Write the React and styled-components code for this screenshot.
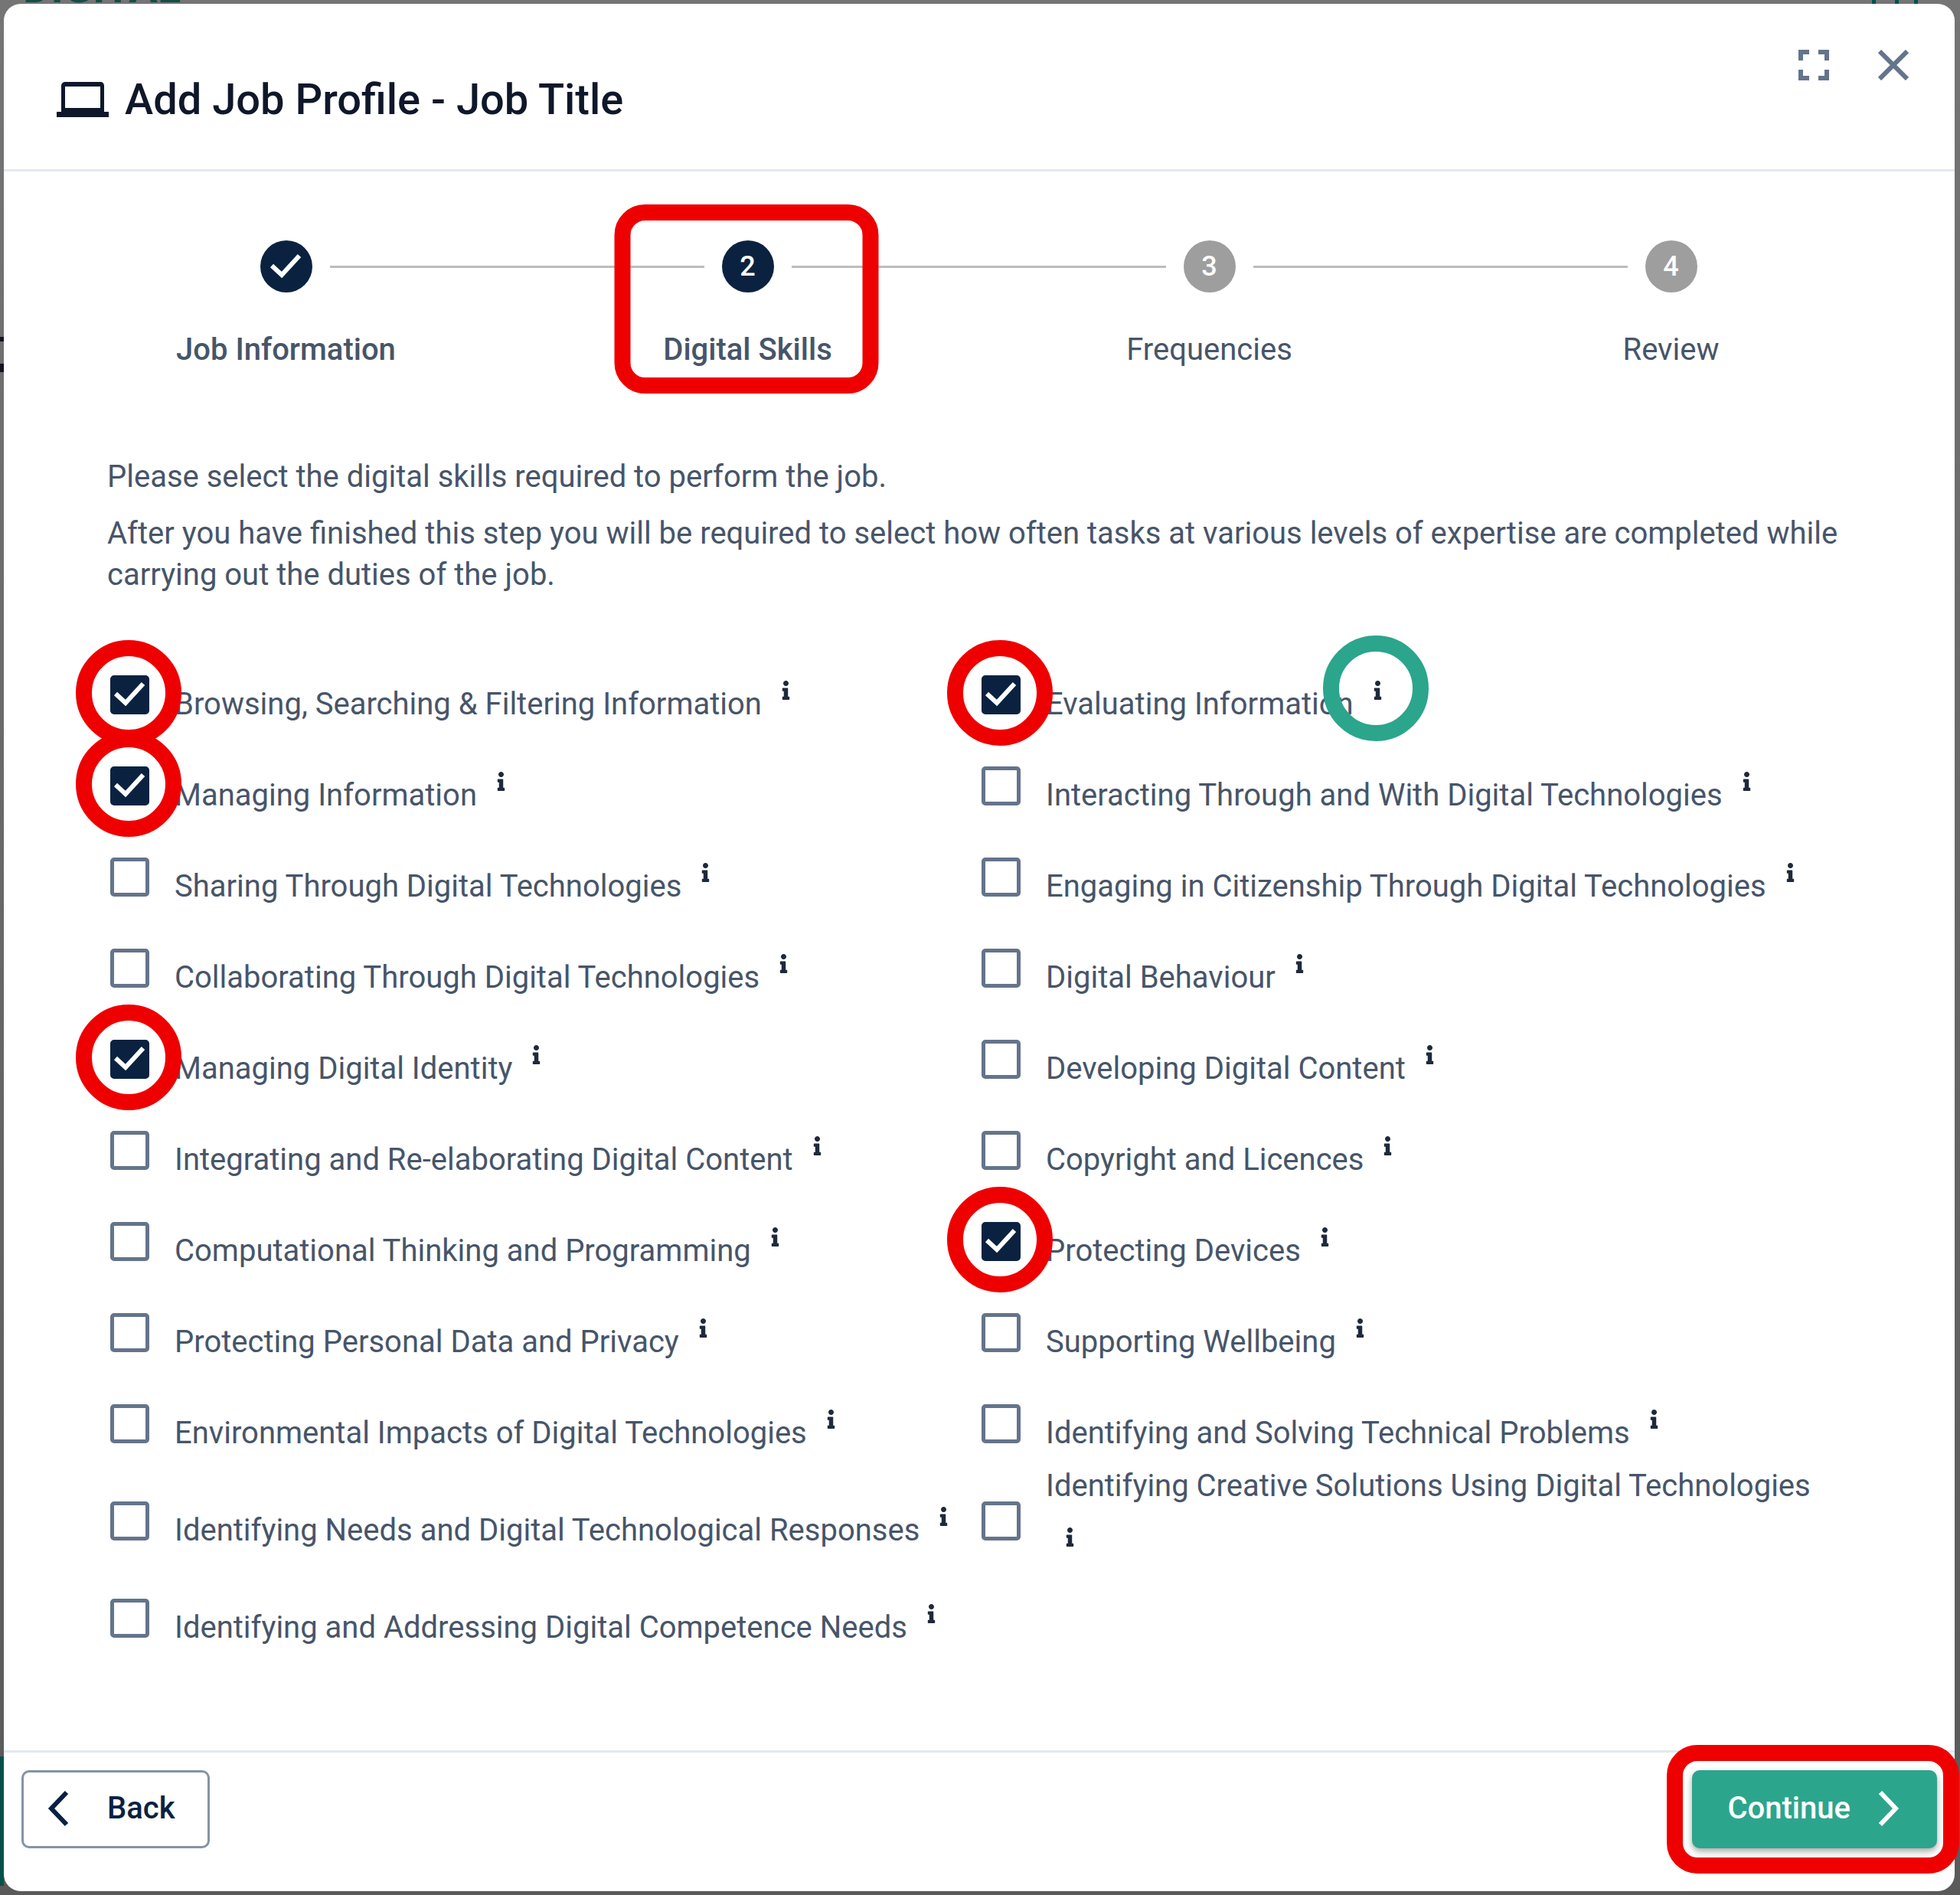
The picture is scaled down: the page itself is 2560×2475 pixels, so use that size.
import React, { useState } from 'react';
import styled, { createGlobalStyle, css } from 'styled-components';
import { FaInfo } from 'react-icons/fa';

const GlobalStyle = createGlobalStyle`
  * {
    box-sizing: border-box;
  }
  body {
    margin: 0;
    font-family: Roboto, 'Liberation Sans', sans-serif;
    font-size: 40px;
    line-height: 54px;
    color: #475569;
  }
`;

const Backdrop = styled.div`
  position: relative;
  overflow: hidden;
  min-height: 100vh;
  padding: 5px 7px 5px 5px;
  background:
    linear-gradient(#00524b, #00524b) 0 2294px / 5px 169px no-repeat,
    linear-gradient(#10141f, #10141f) 0 440px / 5px 6px no-repeat,
    linear-gradient(#10141f, #10141f) 0 475px / 5px 11px no-repeat,
    linear-gradient(#00524b, #00524b) right 110px top 0 / 5px 5px no-repeat,
    linear-gradient(#00524b, #00524b) right 80px top 0 / 5px 5px no-repeat,
    linear-gradient(#00524b, #00524b) right 55px top 0 / 5px 5px no-repeat,
    linear-gradient(#757575, #646464 60%, #5a5a5a);
`;
const Brand = styled.div`
  position: absolute;
  top: -43px;
  left: 30px;
  font-size: 56px;
  font-weight: 700;
  color: #124f45;
`;
const Dialog = styled.main`
  position: relative;
  border-radius: 22px;
  background: #fff;
`;

const Header = styled.header`
  display: flex;
  align-items: flex-start;
  justify-content: space-between;
  height: 219px;
  padding: 50px 50px 0 69px;
  border-bottom: 3px solid #e2e8f0;
`;
const Title = styled.h1`
  display: flex;
  align-items: center;
  gap: 21px;
  margin: 40px 0 0;
  font-size: 56px;
  font-weight: 500;
  line-height: 70px;
  color: #0f172a;
`;
const HeaderActions = styled.div`
  display: flex;
  gap: 44px;
`;
const IconButton = styled.button`
  display: flex;
  padding: 10px;
  border: 0;
  background: none;
  color: #64748b;
  cursor: pointer;
`;

const Steps = styled.ol`
  display: flex;
  margin: 0;
  padding: 90px 69px 0 67px;
  list-style: none;
`;
const Step = styled.li`
  position: relative;
  flex: 1;
  display: flex;
  flex-direction: column;
  align-items: center;
  gap: 48px;
`;
const StepTrack = styled.div`
  display: flex;
  align-items: center;
  gap: 23px;
  width: 100%;
`;
const StepLine = styled.span`
  flex: 1;
  height: 3px;
  background: ${({ $hidden }) => ($hidden ? 'transparent' : '#bdbdbd')};
`;
const StepCircle = styled.span`
  display: flex;
  align-items: center;
  justify-content: center;
  width: 68px;
  height: 68px;
  border-radius: 50%;
  background: ${({ $reached }) => ($reached ? '#0a2240' : '#9e9e9e')};
  color: #fff;
  font-size: 36px;
  font-weight: 500;
`;
const StepLabel = styled.span`
  font-weight: ${({ $reached }) => ($reached ? 500 : 400)};
`;

const Body = styled.form`
  padding: 112px 137px 113px 135px;
`;
const Intro = styled.p`
  margin: 0 0 20px;
`;
const SkillGrid = styled.div`
  display: grid;
  grid-template-columns: 1fr 1fr;
  padding-top: 50px;
`;
const Skill = styled.div`
  display: flex;
  align-items: center;
  min-height: 119px;
  padding-left: 4px;
`;
const CheckWrap = styled.span`
  position: relative;
  flex: none;
  display: flex;
  width: 51px;
  height: 51px;
  margin-right: 33px;
`;
const CheckInput = styled.input`
  appearance: none;
  width: 51px;
  height: 51px;
  margin: 0;
  border: 5px solid #64748b;
  border-radius: 5px;
  cursor: pointer;

  &:checked {
    border-color: #0a2240;
    background: #0a2240;
  }
`;
const CheckMark = styled.svg`
  position: absolute;
  inset: 0;
  pointer-events: none;
`;
const SkillText = styled.div`
  margin: -5px 0;
`;
const InfoButton = styled.button`
  display: inline-flex;
  padding: 27px 26px 39px;
  border: 0;
  background: none;
  color: #1e293b;
  vertical-align: 19px;
  cursor: pointer;
`;
const InfoIcon = styled.span`
  position: relative;
  display: flex;

  svg {
    width: 11px;
    height: 25px;
  }
`;

const Footer = styled.footer`
  display: flex;
  justify-content: space-between;
  padding: 23px 23px 56px;
  border-top: 3px solid #e2e8f0;
`;
const Button = styled.button`
  position: relative;
  display: flex;
  align-items: center;
  height: 102px;
  border: 3px solid #8593a5;
  border-radius: 10px;
  background: #fff;
  color: #0a2240;
  font: 500 40px Roboto, 'Liberation Sans', sans-serif;
  gap: 50px;
  padding: 0 42px 3px 31px;
  cursor: pointer;

  ${({ $primary }) =>
    $primary &&
    css`
      gap: 36px;
      padding: 0 46px 3px 43px;
      border-color: #2ca58d;
      background: #2ca58d;
      color: #fff;
      box-shadow: 0 4px 8px rgba(0, 0, 0, 0.35);
    `}
`;

// markers drawn over the controls the guide points at
const Ring = styled.span`
  position: absolute;
  top: calc(50% - 3px);
  left: calc(50% - 2px);
  width: 138px;
  height: 138px;
  border: 21px solid ${({ $color }) => $color || '#ef0000'};
  border-radius: 50%;
  transform: translate(-50%, -50%);
  pointer-events: none;
`;
const BoxRing = styled.span`
  position: absolute;
  top: ${({ $top }) => -$top}px;
  bottom: ${({ $bottom }) => -$bottom}px;
  left: calc(50% - 2px);
  width: ${({ $width }) => $width}px;
  border: 21px solid #ef0000;
  border-radius: 40px;
  transform: translateX(-50%);
  pointer-events: none;
`;

const STEPS = ['Job Information', 'Digital Skills', 'Frequencies', 'Review'];
const CURRENT_STEP = 1;

const SKILLS = [
  { name: 'Browsing, Searching & Filtering Information', selected: true },
  { name: 'Evaluating Information', selected: true, infoMarked: true },
  { name: 'Managing Information', selected: true },
  { name: 'Interacting Through and With Digital Technologies' },
  { name: 'Sharing Through Digital Technologies' },
  { name: 'Engaging in Citizenship Through Digital Technologies' },
  { name: 'Collaborating Through Digital Technologies' },
  { name: 'Digital Behaviour' },
  { name: 'Managing Digital Identity', selected: true },
  { name: 'Developing Digital Content' },
  { name: 'Integrating and Re-elaborating Digital Content' },
  { name: 'Copyright and Licences' },
  { name: 'Computational Thinking and Programming' },
  { name: 'Protecting Devices', selected: true },
  { name: 'Protecting Personal Data and Privacy' },
  { name: 'Supporting Wellbeing' },
  { name: 'Environmental Impacts of Digital Technologies' },
  { name: 'Identifying and Solving Technical Problems' },
  { name: 'Identifying Needs and Digital Technological Responses' },
  { name: 'Identifying Creative Solutions Using Digital Technologies' },
  { name: 'Identifying and Addressing Digital Competence Needs' },
];

function Tick() {
  return <path d="M7 24l13 12 23-25" fill="none" stroke="#fff" strokeWidth="6" />;
}

function LaptopIcon() {
  return (
    <svg width="68" height="46" viewBox="0 0 68 46" fill="currentColor">
      <path
        fillRule="evenodd"
        d="M12 0h45c3 0 5 2 5 5v34h6v7H0v-7h6V5c0-3 2-5 6-5zm-1 6v28h46V6z"
      />
    </svg>
  );
}

function SkillItem({ id, name, selected, infoMarked }) {
  const [checked, setChecked] = useState(Boolean(selected));
  return (
    <Skill>
      <CheckWrap>
        <CheckInput
          type="checkbox"
          id={id}
          checked={checked}
          onChange={e => setChecked(e.target.checked)}
        />
        {checked && (
          <CheckMark viewBox="0 0 51 51">
            <Tick />
          </CheckMark>
        )}
        {selected && <Ring />}
      </CheckWrap>
      <SkillText>
        <label htmlFor={id}>{name}</label>
        <InfoButton type="button" aria-label={`About ${name}`}>
          <InfoIcon>
            <FaInfo />
            {infoMarked && <Ring $color="#2ca58d" />}
          </InfoIcon>
        </InfoButton>
      </SkillText>
    </Skill>
  );
}

export default function App() {
  return (
    <Backdrop>
      <GlobalStyle />
      <Brand aria-hidden="true">DIGITAL</Brand>
      <Dialog>
        <Header>
          <Title>
            <LaptopIcon />
            Add Job Profile - Job Title
          </Title>
          <HeaderActions>
            <IconButton type="button" aria-label="Full screen">
              <svg width="40" height="40" viewBox="0 0 40 40" fill="none" stroke="currentColor" strokeWidth="6">
                <path d="M3 14V3h11M26 3h11v11M37 26v11H26M14 37H3V26" />
              </svg>
            </IconButton>
            <IconButton type="button" aria-label="Close">
              <svg width="40" height="40" viewBox="0 0 40 40" stroke="currentColor" strokeWidth="6">
                <path d="M2 2l36 36M38 2L2 38" />
              </svg>
            </IconButton>
          </HeaderActions>
        </Header>

        <Steps>
          {STEPS.map((label, i) => (
            <Step key={label}>
              <StepTrack>
                <StepLine $hidden={i === 0} />
                <StepCircle $reached={i <= CURRENT_STEP}>
                  {i < CURRENT_STEP ? (
                    <svg width="51" height="51" viewBox="0 0 51 51">
                      <Tick />
                    </svg>
                  ) : (
                    i + 1
                  )}
                </StepCircle>
                <StepLine $hidden={i === STEPS.length - 1} />
              </StepTrack>
              <StepLabel $reached={i <= CURRENT_STEP}>{label}</StepLabel>
              {i === CURRENT_STEP && <BoxRing $width={345} $top={47} $bottom={30} />}
            </Step>
          ))}
        </Steps>

        <Body>
          <Intro>Please select the digital skills required to perform the job.</Intro>
          <Intro>
            After you have finished this step you will be required to select how often tasks at
            various levels of expertise are completed while carrying out the duties of the job.
          </Intro>
          <SkillGrid>
            {SKILLS.map((skill, i) => (
              <SkillItem key={skill.name} id={`skill-${i}`} {...skill} />
            ))}
          </SkillGrid>
        </Body>

        <Footer>
          <Button type="button">
            <svg width="28" height="48" viewBox="0 0 28 48" fill="none" stroke="currentColor" strokeWidth="6">
              <path d="M25 3L5 24l20 21" />
            </svg>
            Back
          </Button>
          <Button type="button" $primary>
            Continue
            <svg width="28" height="48" viewBox="0 0 28 48" fill="none" stroke="currentColor" strokeWidth="6">
              <path d="M3 3l20 21L3 45" />
            </svg>
            <BoxRing $width={382} $top={36} $bottom={36} />
          </Button>
        </Footer>
      </Dialog>
    </Backdrop>
  );
}
